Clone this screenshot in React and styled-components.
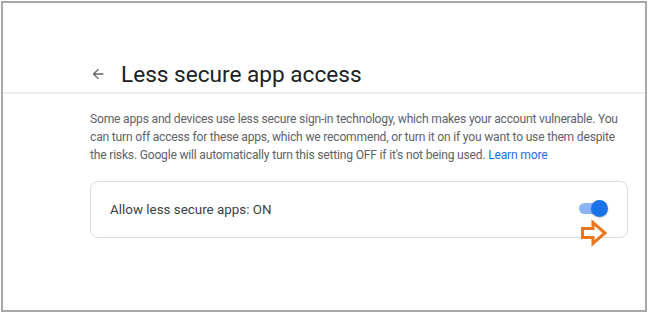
import React, { useState } from "react";
import styled, { createGlobalStyle } from "styled-components";

const GlobalStyle = createGlobalStyle`
  html, body {
    margin: 0;
    padding: 0;
    background: #ffffff;
  }
  body {
    font-family: Roboto, "Liberation Sans", Arial, sans-serif;
  }
`;

const Frame = styled.div`
  box-sizing: border-box;
  margin: 1px 1px 0 1px;
  width: 646px;
  height: 311px;
  border: 2px solid #a8a8a8;
  background: #fff;
  display: flex;
  flex-direction: column;
`;

const Header = styled.div`
  display: flex;
  align-items: center;
  gap: 14px;
  padding: 54px 0 1px 86px;
  height: 34px;
  border-bottom: 2px solid #ececec;
`;

const BackButton = styled.button`
  border: none;
  background: none;
  padding: 0;
  width: 18px;
  height: 18px;
  display: flex;
  align-items: center;
  justify-content: center;
  cursor: pointer;
  color: #5f6368;
`;

const Title = styled.h1`
  margin: 0;
  font-size: 22.6px;
  font-weight: 400;
  color: #202124;
  letter-spacing: 0;
`;

const Body = styled.div`
  padding: 16px 0 0 87px;
  width: 545px;
`;

const Description = styled.p`
  margin: 0;
  width: 545px;
  white-space: nowrap;
  font-size: 12.1px;
  letter-spacing: -0.2px;
  line-height: 18px;
  color: #5f6368;
`;

const Link = styled.a`
  color: #1a73e8;
  text-decoration: none;
`;

const Card = styled.div`
  position: relative;
  box-sizing: border-box;
  margin-top: 17px;
  width: 538px;
  height: 57px;
  border: 1px solid #dadce0;
  border-radius: 8px;
  display: flex;
  align-items: center;
  justify-content: space-between;
  padding: 0 22px 0 19px;
`;

const CardLabel = styled.span`
  font-size: 13.4px;
  color: #3c4043;
  margin-top: -1px;
`;

const Track = styled.button`
  position: relative;
  border: none;
  padding: 0;
  width: 26px;
  height: 11px;
  border-radius: 6px;
  background: ${(p) => (p.$on ? "#8ab4f8" : "#bdc1c6")};
  cursor: pointer;
  margin-top: -2px;
`;

const Knob = styled.span`
  position: absolute;
  top: -3px;
  left: ${(p) => (p.$on ? "12px" : "-2px")};
  width: 17px;
  height: 17px;
  border-radius: 50%;
  background: ${(p) => (p.$on ? "#1a73e8" : "#f1f3f4")};
  box-shadow: 0 1px 2px rgba(60, 64, 67, 0.3);
`;

const Pointer = styled.svg`
  position: absolute;
  right: 19px;
  top: 37px;
`;

export default function App() {
  const [on, setOn] = useState(true);

  return (
    <>
      <GlobalStyle />
      <Frame>
        <Header>
          <BackButton aria-label="Back">
            <svg width="16" height="16" viewBox="0 0 24 24">
              <path
                d="M20 11H7.83l5.59-5.59L12 4l-8 8 8 8 1.41-1.41L7.83 13H20v-2z"
                fill="#5f6368"
              />
            </svg>
          </BackButton>
          <Title>Less secure app access</Title>
        </Header>
        <Body>
          <Description>
            Some apps and devices use less secure sign-in technology, which
            makes your account vulnerable. You
            <br />
            can turn off access for these apps, which we recommend, or turn it
            on if you want to use them despite
            <br />
            the risks. Google will automatically turn this setting OFF if it's
            not being used. <Link href="#">Learn more</Link>
          </Description>
          <Card>
            <CardLabel>Allow less secure apps: {on ? "ON" : "OFF"}</CardLabel>
            <Track $on={on} onClick={() => setOn(!on)} aria-label="Toggle">
              <Knob $on={on} />
            </Track>
            <Pointer width="28" height="28" viewBox="0 0 28 28">
              <path
                d="M2.5 9.5 H13 V3.5 L25 14 L13 24.5 V18.5 H2.5 Z"
                fill="#fff"
                stroke="#e8761f"
                strokeWidth="3"
                strokeLinejoin="miter"
              />
            </Pointer>
          </Card>
        </Body>
      </Frame>
    </>
  );
}
